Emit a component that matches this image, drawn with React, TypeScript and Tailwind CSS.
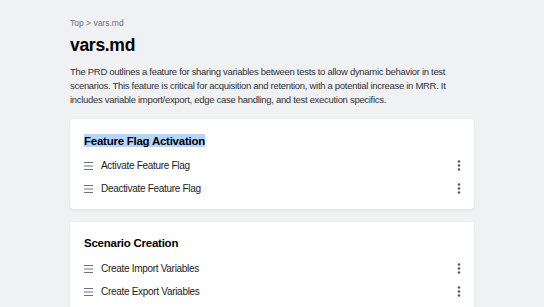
const sections = [
  { title: "Feature Flag Activation", items: ["Activate Feature Flag", "Deactivate Feature Flag"], selected: true },
  { title: "Scenario Creation", items: ["Create Import Variables", "Create Export Variables"], selected: false },
];

function DragHandle() {
  return (
    <svg width="9" height="8" viewBox="0 0 9 8" className="text-gray-500 shrink-0">
      <path d="M0 0.5h9M0 4h9M0 7.5h9" stroke="currentColor" strokeWidth="1" />
    </svg>
  );
}

function Kebab() {
  return (
    <svg width="4" height="11" viewBox="0 0 4 11" className="text-gray-600 shrink-0">
      <circle cx="2" cy="1.5" r="1.2" fill="currentColor" />
      <circle cx="2" cy="5.5" r="1.2" fill="currentColor" />
      <circle cx="2" cy="9.5" r="1.2" fill="currentColor" />
    </svg>
  );
}

export default function App() {
  return (
    <div className="h-[307px] w-[544px] overflow-hidden bg-[#f0f1f3] font-['Liberation_Sans',sans-serif] text-[#1c1c1e]">
      <div className="px-[70px] pt-[17px]">
        <p className="text-[8.5px] leading-[12px] text-gray-500">Top &gt; vars.md</p>
        <h1 className="mt-[5px] text-[17.5px] font-bold leading-[22px] tracking-[-0.3px] text-black">vars.md</h1>
        <p className="mt-[9px] text-[9.5px] leading-[14px] tracking-[-0.3px] text-[#333336]">
          The PRD outlines a feature for sharing variables between tests to allow dynamic behavior in test scenarios. This feature is critical for acquisition and retention, with a potential increase in MRR. It includes variable import/export, edge case handling, and test execution specifics.
        </p>
        <div className="mt-[12px] flex flex-col gap-[13px]">
          {sections.map((s) => (
            <div key={s.title} className="rounded-[4px] bg-white pl-[14px] pr-[13px] pb-[9px] pt-[14px] shadow-[0_1px_3px_rgba(0,0,0,0.08)]">
              <h2 className="text-[11.5px] font-bold leading-[14px] tracking-[-0.25px] text-black">
                <span className={s.selected ? "bg-[#b4d5fe] py-[0.5px]" : ""}>{s.title}</span>
              </h2>
              <div className="mt-[7px] flex flex-col">
                {s.items.map((item) => (
                  <div key={item} className="flex h-[23px] items-center gap-[8px]">
                    <DragHandle />
                    <span className="flex-1 text-[10px] tracking-[-0.3px] text-[#1c1c1e]">{item}</span>
                    <Kebab />
                  </div>
                ))}
              </div>
            </div>
          ))}
        </div>
      </div>
    </div>
  );
}
